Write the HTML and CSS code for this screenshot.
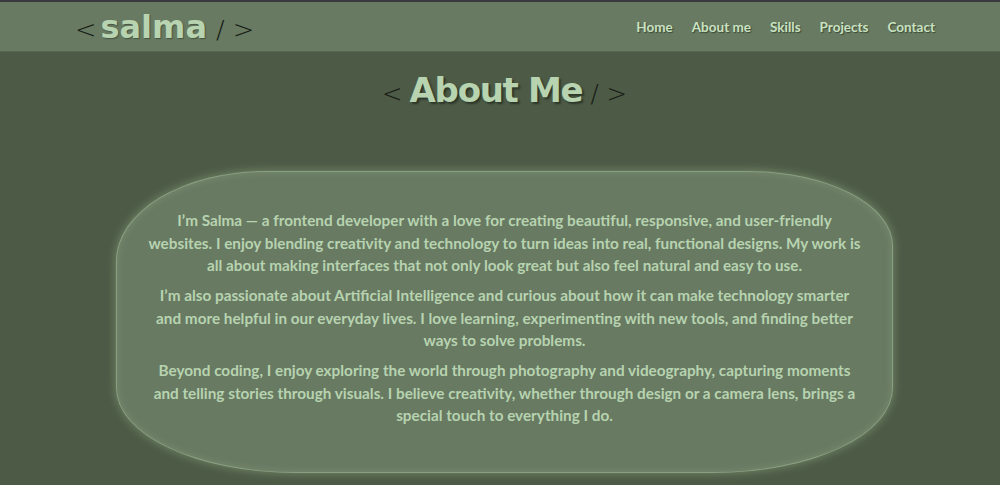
FILE: index.html
```html
<!DOCTYPE html>
<html lang="en">
<head>
<meta charset="utf-8">
<title>salma - About Me</title>
<link rel="stylesheet" href="styles.css">
</head>
<body>
<header class="topbar">
  <div class="logo"><span class="br">&lt;</span> <span class="name">salma</span> <span class="br">/ &gt;</span></div>
  <nav class="nav">
    <a href="#">Home</a>
    <a href="#">About me</a>
    <a href="#">Skills</a>
    <a href="#">Projects</a>
    <a href="#">Contact</a>
  </nav>
</header>
<main class="about">
  <h1 class="title"><span class="br">&lt;</span> <span class="name">About Me</span> <span class="br">/ &gt;</span></h1>
  <section class="card">
    <p>I’m Salma — a frontend developer with a love for creating beautiful, responsive, and user-friendly websites. I enjoy blending creativity and technology to turn ideas into real, functional designs. My work is all about making interfaces that not only look great but also feel natural and easy to use.</p>
    <p>I’m also passionate about Artificial Intelligence and curious about how it can make technology smarter and more helpful in our everyday lives. I love learning, experimenting with new tools, and finding better ways to solve problems.</p>
    <p>Beyond coding, I enjoy exploring the world through photography and videography, capturing moments and telling stories through visuals. I believe creativity, whether through design or a camera lens, brings a special touch to everything I do.</p>
  </section>
</main>
</body>
</html>
```
FILE: styles.css
```css
html, body { margin: 0; padding: 0; }
body {
  background: #4d5b46;
  color: #b7d3b0;
  font-family: "Lato", "Liberation Sans", sans-serif;
  height: 485px;
  overflow: hidden;
}
.topbar {
  border-top: 2px solid #3a3a3e;
  height: 49px;
  background: #687a62;
  border-bottom: 1px solid #56664f;
  display: flex;
  align-items: center;
  justify-content: space-between;
  padding: 0 65px 0 75px;
}
.logo { font-size: 32px; display: flex; align-items: baseline; }
.br { color: #161a14; font-family: "DejaVu Sans", sans-serif; font-weight: 300; font-size: 0.8em; }
.logo .name, .title .name {
  font-family: "DejaVu Sans", sans-serif;
  font-weight: bold;
  color: #b7d3b0;
  text-shadow: 1px 1px 1px rgba(40,50,36,0.5);
}
.logo .name { margin: 0 9px 0 4px; }
.nav { display: flex; gap: 19px; }
.nav a {
  color: #c9e2c1;
  text-decoration: none;
  font-weight: 700;
  font-size: 13.5px;
  text-shadow: 1px 1px 1px rgba(30,40,28,0.6);
}
.about { display: flex; flex-direction: column; align-items: center; padding-left: 9px; }
.title {
  margin: 18px 0 0 0;
  font-size: 34px;
  display: flex;
  align-items: baseline;
  line-height: 40px;
}
.title .br { font-size: 0.72em; }
.title .name { text-shadow: 2px 2px 2px rgba(30,38,28,0.7); margin: 0 8px 0 7px; letter-spacing: -1.3px; }
.card {
  margin-top: 57px;
  width: 777px;
  height: 302px;
  box-sizing: border-box;
  background: #687a62;
  border: 1px solid #8aa083;
  border-radius: 150px 145px 180px 180px / 90px 75px 85px 85px;
  box-shadow: 0 0 10px rgba(170,200,160,0.45), inset 0 0 8px rgba(170,200,160,0.25);
  padding: 37px 31px 0;
  text-align: center;
}
.card p {
  margin: 0 0 7.5px;
  font-size: 15.3px;
  font-weight: 700;
  line-height: 22.5px;
}
```
